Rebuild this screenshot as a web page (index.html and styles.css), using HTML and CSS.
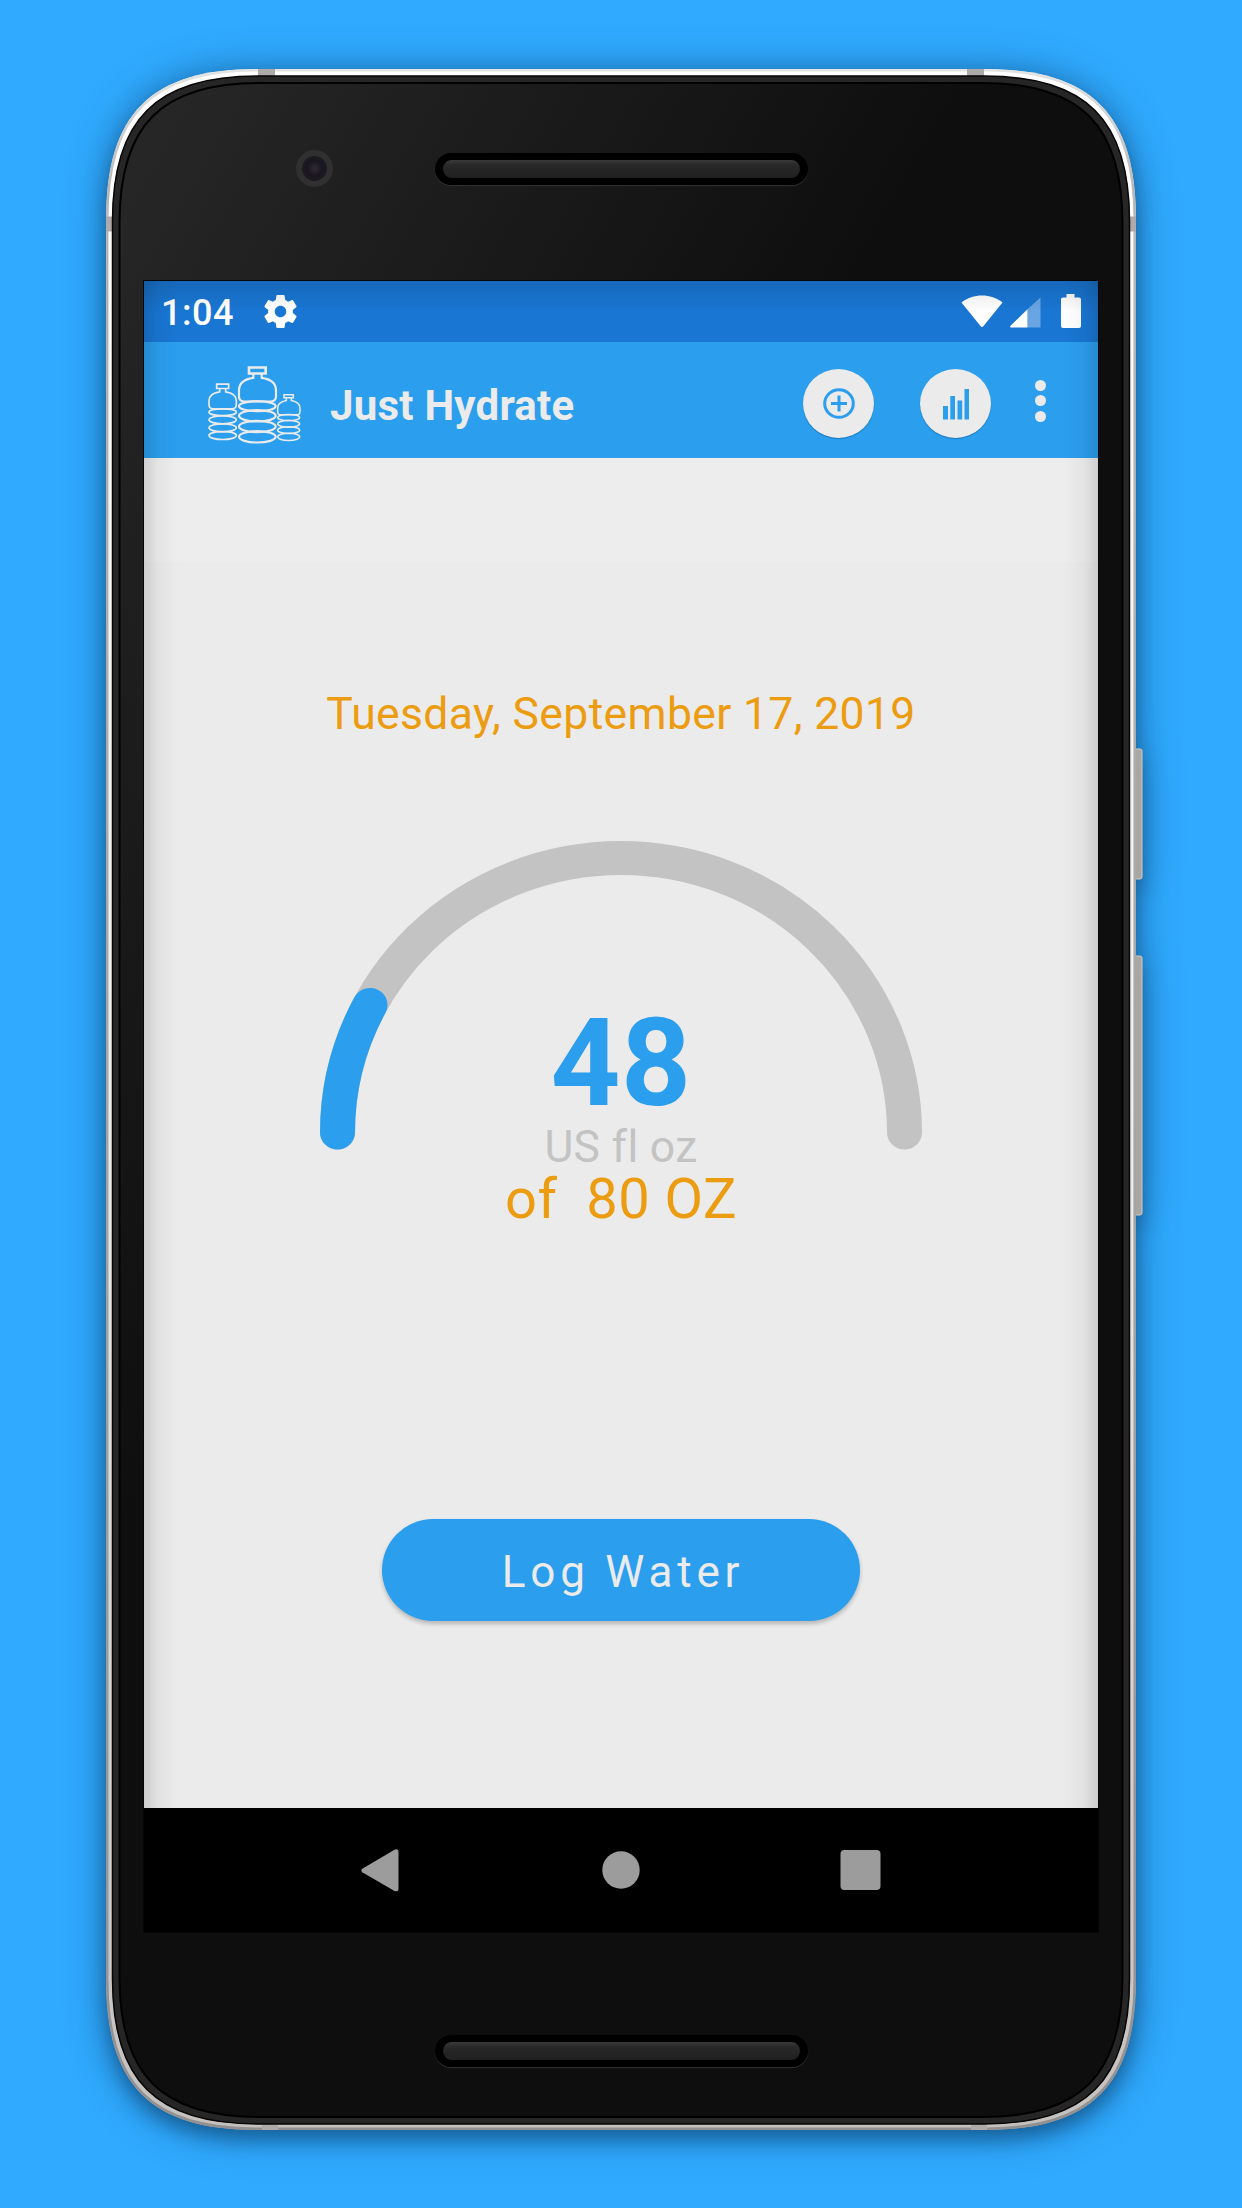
FILE: index.html
```html
<!DOCTYPE html>
<html lang="en">
<head>
<meta charset="utf-8">
<title>Just Hydrate</title>
<link rel="stylesheet" href="styles.css">
</head>
<body>
<div class="phone">
  <svg class="frame" viewBox="0 0 1030 2061" aria-hidden="true">
    <defs>
      <linearGradient id="metal" x1="0" y1="0" x2="0" y2="1">
        <stop offset="0" stop-color="#ffffff"/>
        <stop offset="0.5" stop-color="#ececec"/>
        <stop offset="1" stop-color="#c4c0be"/>
      </linearGradient>
      <linearGradient id="glass" gradientUnits="userSpaceOnUse" x1="60" y1="60" x2="640" y2="400">
        <stop offset="0" stop-color="#262626"/>
        <stop offset="1" stop-color="#0e0e0e"/>
      </linearGradient>
      <linearGradient id="edge" x1="0" y1="0" x2="0" y2="1">
        <stop offset="0" stop-color="#e4e4e4"/>
        <stop offset="0.06" stop-color="#b9b7b6"/>
        <stop offset="1" stop-color="#929090"/>
      </linearGradient>
      <clipPath id="body"><path d="M0 150C0 45 45 0 150 0H880C985 0 1030 45 1030 150V1911C1030 2016 985 2061 880 2061H150C45 2061 0 2016 0 1911Z"/></clipPath>
    </defs>
    <g class="keys">
      <rect x="1024" y="680" width="12" height="130" rx="2"/>
      <rect x="1024" y="887" width="12" height="259" rx="2"/>
    </g>
    <g clip-path="url(#body)">
      <path fill="url(#metal)" stroke="url(#edge)" stroke-width="5" d="M0 150C0 45 45 0 150 0H880C985 0 1030 45 1030 150V1911C1030 2016 985 2061 880 2061H150C45 2061 0 2016 0 1911Z"/>
      <path class="band" d="M152 0h17v8h-17zM861 0h17v8h-17zM0 147.500h8v15H0zM1022 147.500h8v15h-8zM156 2053h16v8h-16zM865 2053h16v8h-16z"/>
    </g>
    <path fill="#262626" stroke="#050505" stroke-width="1.500" d="M6.500 152C6.500 50.500 50 7 151.500 7H878.500C980 7 1023.500 50.500 1023.500 152V1910C1023.500 2011.500 980 2055 878.500 2055H151.500C50 2055 6.500 2011.500 6.500 1910Z"/>
    <path fill="url(#glass)" stroke="#000" stroke-width="2" d="M13.500 154C13.500 56 55.500 14 153.500 14H876.500C974.500 14 1016.500 56 1016.500 154V1908C1016.500 2006 974.500 2048 876.500 2048H153.500C55.500 2048 13.500 2006 13.500 1908Z"/>
  </svg>

  <div class="forehead">
    <span class="camera"></span>
    <span class="speaker"></span>
  </div>

  <div class="screen">
    <div class="statusbar">
      <span class="clock">1:04</span>
      <svg class="gear" viewBox="2 2 20 20"><path d="M19.430 12.980c.040-.320.070-.640.070-.980s-.030-.660-.070-.980l2.110-1.650c.190-.150.240-.420.120-.640l-2-3.460c-.120-.220-.390-.300-.610-.220l-2.490 1c-.520-.400-1.080-.730-1.690-.980l-.380-2.650C14.460 2.180 14.250 2 14 2h-4c-.250 0-.460.180-.490.420l-.380 2.650c-.610.250-1.170.590-1.690.980l-2.490-1c-.230-.090-.490 0-.610.220l-2 3.460c-.130.220-.070.490.120.640l2.110 1.650c-.040.320-.070.650-.070.980s.030.660.070.980l-2.110 1.650c-.190.150-.240.420-.120.640l2 3.460c.120.220.390.300.610.220l2.490-1c.520.400 1.080.730 1.690.980l.380 2.650c.030.240.240.420.490.420h4c.250 0 .460-.180.490-.420l.380-2.650c.610-.250 1.170-.590 1.690-.980l2.490 1c.230.090.490 0 .610-.220l2-3.460c.120-.220.070-.490-.120-.640l-2.110-1.650zM12 15.500c-1.930 0-3.500-1.570-3.500-3.500s1.570-3.500 3.500-3.500 3.500 1.570 3.500 3.500-1.570 3.500-3.500 3.500z"/></svg>
      <svg class="indicators" viewBox="0 0 120 36">
        <path d="M.5 8.500C12-.8 30-.8 41.500 8.500L22.300 32.200q-1.300 1.600-2.600 0Z"/>
        <path opacity=".35" d="M66.500 15.200 79.500 3.500V33.500H66.500z"/>
        <path d="M66.500 15.200V33.500H50q-1.500-.5-.5-1.700Z"/>
        <path d="M105.500 0h8v3.500h4.500q2 0 2 2V32q0 2-2 2h-16q-2 0-2-2V5.500q0-2 2-2h3.500z"/>
      </svg>
    </div>

    <div class="appbar">
      <svg class="bottles" viewBox="195 280 300 245">
        <g stroke-width="6.500">
          <path stroke-width="8" d="M327 293h50v18h-50z"/>
          <path d="M340 312v12c-30 4-43 17-43 38v18c0 10 8 15 18 15h75c10 0 18-5 18-15v-18c0-21-13-34-43-38v-12"/>
          <ellipse cx="352" cy="409" rx="55" ry="15"/>
          <ellipse cx="352" cy="438" rx="55" ry="17"/>
          <ellipse cx="352" cy="470" rx="55" ry="17"/>
          <ellipse cx="352" cy="501" rx="55" ry="17"/>
        </g>
        <g stroke-width="5">
          <path d="M230 343h36v13h-36zM239 357v9c-22 3-32 12-32 27v11c0 9 5 13 13 13h56c8 0 13-4 13-13v-11c0-15-10-24-32-27v-9"/>
          <ellipse cx="248" cy="427" rx="41" ry="10"/>
          <ellipse cx="248" cy="450" rx="41" ry="12"/>
          <ellipse cx="248" cy="474" rx="41" ry="12"/>
          <ellipse cx="248" cy="497" rx="41" ry="12"/>
        </g>
        <g stroke-width="4.500">
          <path d="M432 375h28v9h-28zM439 385v7c-17 3-26 11-26 23v10c0 6 4 10 10 10h47c6 0 10-4 10-10v-10c0-12-9-20-26-23v-7"/>
          <ellipse cx="446" cy="443" rx="33" ry="9"/>
          <ellipse cx="446" cy="462" rx="33" ry="10"/>
          <ellipse cx="446" cy="481" rx="33" ry="10"/>
          <ellipse cx="446" cy="501" rx="33" ry="11"/>
        </g>
      </svg>
      <h1 class="title">Just Hydrate</h1>
      <span class="action">
        <svg viewBox="0 0 32 31" fill="none" stroke="#2b9eee" stroke-width="3"><ellipse cx="16" cy="15.500" rx="14.300" ry="13.800"/><path d="M16 7.500v16M8 15.500h16"/></svg>
      </span>
      <span class="action action-chart">
        <svg viewBox="0 0 28 32" fill="#2b9eee"><path d="M1 18h5v13.500H1zM8.300 8h4.700v23.500H8.300zM15.500 12.500h4.700v19h-4.700zM22.500 1H27v30.500h-4.500z"/></svg>
      </span>
      <span class="menu"><i></i><i></i><i></i></span>
    </div>

    <div class="content">
      <p class="date">Tuesday, September 17, 2019</p>
      <div class="gauge">
        <svg class="arc" viewBox="0 0 602 320" preserveAspectRatio="none" aria-hidden="true">
          <path stroke="#c3c3c3" d="M17.500 301A283.500 283.500 0 0 1 584.500 301"/>
          <path stroke="#2b9eee" d="M17.500 301A283.500 283.500 0 0 1 50 169.200"/>
        </svg>
        <div class="reading">
          <strong class="amount">48</strong>
          <span class="unit">US fl oz</span>
          <span class="goal">of&nbsp; 80 OZ</span>
        </div>
      </div>
      <button class="log">Log Water</button>
    </div>

    <div class="navbar">
      <svg viewBox="0 0 38 43"><path d="M1.300 19.800 33.500.700Q37.500-.7 37.500 3.500V39.500Q37.500 43.300 33.500 42L1.300 23.200Q-.7 21.500 1.300 19.800Z"/></svg>
      <svg viewBox="0 0 38 38"><circle cx="19" cy="19" r="18.700"/></svg>
      <svg viewBox="0 0 41 40"><rect x=".5" width="40" height="40" rx="4"/></svg>
    </div>
  </div>

  <div class="chin"><span class="speaker"></span></div>
</div>
</body>
</html>
```
FILE: styles.css
```css
* { box-sizing: border-box; }

body {
  margin: 0;
  height: 2208px;
  overflow: hidden;
  background: #2faaff;
  font-family: Roboto, "Liberation Sans", sans-serif;
  display: flex;
  justify-content: center;
  padding-top: 69px;
}

.phone {
  position: relative;
  isolation: isolate;
  width: 1030px;
  height: 2061px;
  display: grid;
  grid-template-rows: 212px 1651px 1fr;
  grid-template-columns: 954px;
  justify-content: center;
}

.frame {
  position: absolute;
  inset: 0;
  z-index: -1;
  overflow: visible;
  filter: drop-shadow(0 0 20px rgba(0, 30, 60, .32)) drop-shadow(0 10px 9px rgba(0, 30, 60, .4));
}
.keys rect { fill: #aaa6a1; stroke: #cfccc8; stroke-width: 1; }
.band { fill: #aeaaaa; }

.forehead {
  display: grid;
  grid-template-columns: 291px 373px 1fr;
  align-items: start;
}
.camera {
  width: 37px;
  height: 37px;
  margin: 81px 0 0 152px;
  border-radius: 50%;
  border: 6px solid #303030;
  background: radial-gradient(circle, #2b2631 0 10%, #18151e 45%, #1d1a21 65%, #0b0a0c 100%);
}
.speaker {
  display: block;
  width: 373px;
  height: 31.5px;
  border: solid #000;
  border-width: 7px 8px;
  border-radius: 16px;
  background: linear-gradient(#393939, #282828 30%, #202020);
  box-shadow: 0 1px 1px #333;
}
.forehead .speaker { margin-top: 84px; }

.screen {
  position: relative;
  display: flex;
  flex-direction: column;
  background: #ebebeb;
  box-shadow: 0 0 0 1px #060606;
}
/* soft shading cast by the bezel over the app area */
.screen::after {
  content: "";
  position: absolute;
  inset: 0 0 124px;
  pointer-events: none;
  background:
    linear-gradient(90deg, rgba(0, 0, 0, .13), rgba(0, 0, 0, .04) 14px, transparent 34px),
    linear-gradient(-90deg, rgba(0, 0, 0, .13), rgba(0, 0, 0, .04) 14px, transparent 34px),
    linear-gradient(rgba(0, 0, 0, .12), transparent 30px);
}

.statusbar {
  height: 61px;
  display: flex;
  align-items: center;
  padding: 0 17px 0 17px;
  background: #1976d3;
  color: #fff;
}
.statusbar svg { fill: #fff; }
.clock { width: 103px; font-size: 36px; font-weight: 500; line-height: 61px; letter-spacing: .5px; padding-top: 3px; }
.gear { width: 33px; height: 33px; }
.indicators { width: 120px; height: 36px; margin-left: auto; }

.appbar {
  height: 116px;
  display: flex;
  align-items: center;
  background: #2b9eee;
  padding-left: 61px;
}
.bottles { width: 100px; height: 82px; margin-top: 8px; fill: none; stroke: #ebebeb; }
.title { margin: 11px 0 0 25px; width: 473px; font-size: 42px; font-weight: 700; line-height: 50px; letter-spacing: .25px; color: #ebebeb; }
.action {
  flex: none;
  width: 71px;
  height: 69px;
  margin-top: 7px;
  border-radius: 50%;
  background: #ebebeb;
  display: grid;
  place-items: center;
  box-shadow: 0 1px 1px rgba(0, 60, 110, .4);
}
.action svg { width: 32px; height: 31px; }
.action-chart { margin-left: 46px; }
.action-chart svg { width: 28px; height: 32px; }
.menu { display: grid; gap: 4.500px; margin: 1px 0 0 43.500px; }
.menu i { width: 11px; height: 11px; border-radius: 50%; background: #ebebeb; }

.content {
  height: 1350px;
  display: flex;
  flex-direction: column;
  align-items: center;
  background: linear-gradient(#ededed 103px, #ebebeb 106px);
}
.date { margin: 230px 0 0; font-size: 44.500px; line-height: 52px; letter-spacing: .35px; color: #ec9c10; }
.gauge { display: grid; justify-items: center; width: 602px; margin-top: 101px; }
.arc { grid-area: 1 / 1; width: 602px; height: 310px; fill: none; stroke-width: 35; stroke-linecap: round; }
.reading { grid-area: 1 / 1; display: flex; flex-direction: column; align-items: center; padding-top: 163px; }
.amount { font-size: 122px; line-height: 120px; color: #2b9eee; letter-spacing: .5px; }
.unit { margin-top: -3px; font-size: 44.500px; line-height: 52px; letter-spacing: .3px; color: #c3c3c3; }
.goal { font-size: 56px; line-height: 52px; letter-spacing: .5px; color: #ec9c10; }
.log {
  width: 478px;
  height: 102px;
  margin: 294px 0 0;
  padding: 4px 0 0 4px;
  border: 0;
  border-radius: 51px;
  background: #2b9eee;
  color: #ebebeb;
  font: 400 44px Roboto, "Liberation Sans", sans-serif;
  letter-spacing: 4.800px;
  box-shadow: 0 3px 4px rgba(0, 0, 0, .22);
}

.navbar {
  flex: 1;
  display: grid;
  grid-template-columns: repeat(3, 239px);
  justify-content: center;
  justify-items: center;
  align-items: center;
  background: #000;
  fill: #9c9c9c;
}
.navbar svg { width: 38px; height: 43px; }
.navbar svg:first-child { margin-right: 4px; }
.navbar svg:nth-child(2) { height: 38px; }
.navbar svg:nth-child(3) { width: 41px; height: 40px; }

.chin { padding: 103px 0 0 291px; }
```
